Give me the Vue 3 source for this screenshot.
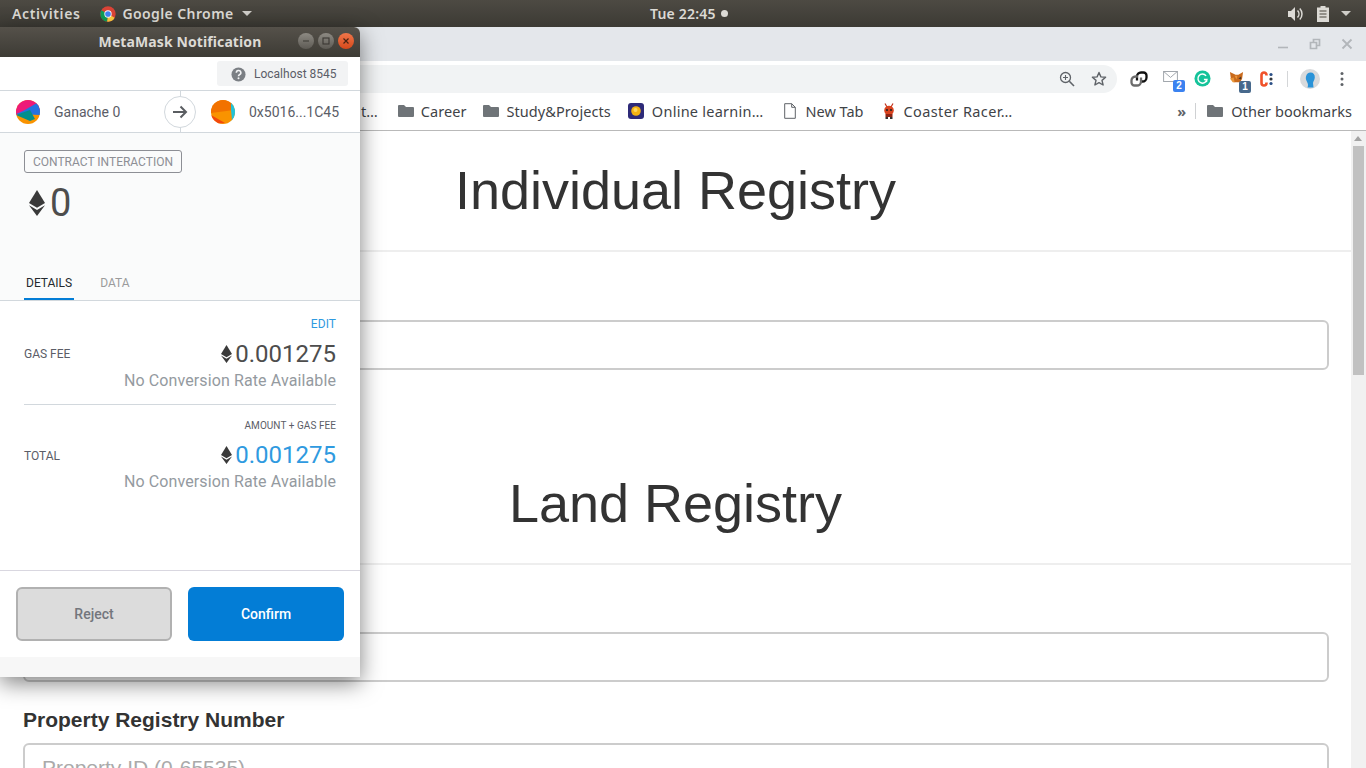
<script setup>
const leftItems = [
  { name: 'Career', icon: 'folder' },
  { name: 'Study&Projects', icon: 'folder' },
  { name: 'Online learnin…', icon: 'coin' },
  { name: 'New Tab', icon: 'page' },
  { name: 'Coaster Racer…', icon: 'bug' },
]

const feeRows = [
  { label: 'GAS FEE', head: 'EDIT', headClass: 'fee__head--edit', amount: '0.001275', amountClass: '' },
  { label: 'TOTAL', head: 'AMOUNT + GAS FEE', headClass: '', amountClass: 'fee__amount--blue', amount: '0.001275' },
]
</script>

<template>
  <div class="desktop">
    <!-- Ubuntu top bar -->
    <header class="topbar">
      <div class="topbar__left">
        <span class="topbar__item topbar__item--wide">Activities</span>
        <span class="topbar__app">
          <svg class="chrome-logo" viewBox="0 0 48 48">
            <circle cx="24" cy="24" r="23" fill="#db4437" />
            <path d="M24 24 44 35.5A23 23 0 0 1 21 46.8z" fill="#ffcd40" />
            <path d="M24 24 21 46.8A23 23 0 0 1 4 12.5z" fill="#0f9d58" />
            <circle cx="24" cy="24" r="11" fill="#fff" />
            <circle cx="24" cy="24" r="8.5" fill="#4285f4" />
          </svg>
          <span class="topbar__item">Google Chrome</span>
          <span class="caret"></span>
        </span>
      </div>
      <div class="topbar__clock">Tue 22:45<i class="dot"></i></div>
      <div class="topbar__right">
        <svg class="tray-icon tray-icon--sound" viewBox="0 0 18 16" width="18" height="16">
          <path d="M1 5h3l4-4v14l-4-4H1z" fill="#dcdad5" />
          <path d="M10.5 4.500a5 5 0 0 1 0 7M12.800 2.500a8 8 0 0 1 0 11" fill="none" stroke="#dcdad5" stroke-width="1.500" />
        </svg>
        <svg class="tray-icon" viewBox="0 0 12 16" width="12" height="16">
          <path d="M3.500 0h5v1.500H12V16H0V1.500h3.500z" fill="#dcdad5" />
          <path d="M2.500 5h7M2.500 8h7M2.500 11h7" stroke="#4a463f" stroke-width="1.200" />
        </svg>
        <span class="caret"></span>
      </div>
    </header>

    <!-- Chrome window -->
    <section class="browser">
      <div class="tabstrip">
        <div class="winctl">
          <svg viewBox="0 0 12 12" width="12" height="12"><path d="M1 9.500h10" stroke="#b2b6ba" stroke-width="1.600" /></svg>
          <svg viewBox="0 0 12 12" width="12" height="12">
            <path d="M1.500 4.500h6v6h-6zM4.500 4V1.500h6v6H8" fill="none" stroke="#b2b6ba" stroke-width="1.700" />
          </svg>
          <svg viewBox="0 0 12 12" width="12" height="12"><path d="M1.500 1.500l9 9M10.500 1.500l-9 9" stroke="#b2b6ba" stroke-width="1.800" /></svg>
        </div>
      </div>

      <div class="toolbar">
        <div class="omnibox">
          <svg viewBox="0 0 16 16" width="16" height="16">
            <circle cx="6.500" cy="6.500" r="5" fill="none" stroke="#5f6368" stroke-width="1.300" />
            <path d="M10.300 10.300 15 15" stroke="#5f6368" stroke-width="1.600" />
            <path d="M4 6.500h5M6.500 4v5" stroke="#5f6368" stroke-width="1.100" />
          </svg>
          <svg viewBox="0 0 16 16" width="16" height="16">
            <path d="M8 1.500l1.900 4.400 4.700.4-3.600 3.100 1.100 4.600L8 11.600 3.900 14l1.100-4.600-3.600-3.100 4.700-.4z" fill="none" stroke="#5f6368" stroke-width="1.400" stroke-linejoin="round" />
          </svg>
        </div>
        <div class="exts">
          <svg class="ext" viewBox="0 0 18 18" width="18" height="18">
            <path d="M7 10.500V6.500a4 4 0 0 1 4-4h2.500a3 3 0 0 1 3 3v2a4 4 0 0 1-4 4H10" fill="none" stroke="#111" stroke-width="2.300" />
            <path d="M11 7.500v4a4 4 0 0 1-4 4H4.500a3 3 0 0 1-3-3v-2a4 4 0 0 1 4-4H8" fill="none" stroke="#6b6b6b" stroke-width="2.300" />
          </svg>
          <span class="ext ext--mail">
            <svg viewBox="0 0 16 12" width="15" height="11">
              <rect x=".5" y=".5" width="15" height="11" fill="#fff" stroke="#9aa0a6" />
              <path d="M.5.500 8 7l7.500-6.500" fill="none" stroke="#9aa0a6" />
            </svg>
            <b class="badge badge--blue">2</b>
          </span>
          <svg class="ext ext--g" viewBox="0 0 18 18" width="17" height="17">
            <circle cx="9" cy="9" r="8.500" fill="#15c39a" />
            <path d="M12.800 6.200A4.800 4.800 0 1 0 13.700 10H10.500" fill="none" stroke="#fff" stroke-width="1.500" />
            <path d="M13.300 10v2.800" stroke="#fff" stroke-width="1.500" />
          </svg>
          <span class="ext ext--fox">
            <svg viewBox="0 0 16 16" width="15" height="15">
              <path d="M1 2l6 3h3l5-3-1 7-2 4H5L2 9z" fill="#c96a1c" />
              <path d="M1 9l4-1 1 5H4zM6 6 9 6l-1 4z" fill="#e9963a" />
              <path d="M10 9l3-2 0 3z" fill="#4a3524" />
            </svg>
            <b class="badge badge--slate">1</b>
          </span>
          <svg class="ext ext--c" viewBox="0 0 14 16" width="14" height="16">
            <path d="M7.500 4.500V4a2.500 2.500 0 0 0-5 0v8a2.500 2.500 0 0 0 5 0v-.5" fill="none" stroke="#f0522a" stroke-width="2.600" />
            <circle cx="12" cy="3.500" r="1.600" fill="#2b4f86" />
            <circle cx="12" cy="8" r="1.600" fill="#33373b" />
            <circle cx="12" cy="12.500" r="1.600" fill="#2b4f86" />
          </svg>
          <span class="toolbar__sep"></span>
          <svg class="ext" viewBox="0 0 20 20" width="20" height="20">
            <circle cx="10" cy="10" r="10" fill="#d8dadc" />
            <path d="M10.500 3.500c3 0 4.500 2 4.300 5-.2 2.500-1.500 3.500-1.800 5.500l.5 4.500H7.500c.8-2 .7-3.500-.4-5.500C6 11 5.500 9.500 6 7.500c.5-2.500 2.300-4 4.500-4z" fill="#2a93d8" />
          </svg>
          <svg class="ext ext--menu" viewBox="0 0 4 16" width="4" height="16">
            <circle cx="2" cy="2.500" r="1.500" fill="#5f6368" />
            <circle cx="2" cy="8" r="1.500" fill="#5f6368" />
            <circle cx="2" cy="13.500" r="1.500" fill="#5f6368" />
          </svg>
        </div>
      </div>

      <nav class="bookmarks">
        <span class="bookmarks__cut">t…</span>
        <span v-for="item in leftItems" :key="item.name" class="bookmark" :class="'bookmark--' + item.icon">
          <svg v-if="item.icon === 'folder'" class="bookmark__icon" viewBox="0 0 16 14" width="16" height="14">
            <path d="M0 2a1 1 0 0 1 1-1h5l2 2h7a1 1 0 0 1 1 1v8a1 1 0 0 1-1 1H1a1 1 0 0 1-1-1z" fill="#6f7478" />
          </svg>
          <svg v-else-if="item.icon === 'coin'" class="bookmark__icon" viewBox="0 0 16 16" width="16" height="16">
            <rect width="16" height="16" rx="3" fill="#2e2a78" />
            <circle cx="8" cy="8" r="4.800" fill="#f5b312" />
            <circle cx="7.500" cy="7" r="2" fill="#ffd75e" />
          </svg>
          <svg v-else-if="item.icon === 'page'" class="bookmark__icon" viewBox="0 0 12 16" width="12" height="16">
            <path d="M.7.700h7l3.600 3.600v11H.7zM7.700.700v3.600h3.600" fill="#fff" stroke="#5f6368" stroke-width="1" />
          </svg>
          <svg v-else class="bookmark__icon" viewBox="0 0 14 16" width="14" height="16">
            <path d="M3 .500 5 4M11 .500 9 4" stroke="#c0341d" stroke-width="1.200" />
            <circle cx="7" cy="7.500" r="4.800" fill="#d9431f" />
            <rect x="3.500" y="11" width="7" height="3" fill="#8f2413" />
            <rect x="3.500" y="14" width="2.500" height="2" fill="#333" />
            <rect x="8" y="14" width="2.500" height="2" fill="#333" />
            <circle cx="5" cy="7" r="1.100" fill="#222" />
            <circle cx="9" cy="7" r="1.100" fill="#222" />
          </svg>
          <span>{{ item.name }}</span>
        </span>
        <span class="bookmarks__more">»</span>
        <span class="bookmarks__sep"></span>
        <span class="bookmark bookmark--other">
          <svg class="bookmark__icon" viewBox="0 0 16 14" width="16" height="14">
            <path d="M0 2a1 1 0 0 1 1-1h5l2 2h7a1 1 0 0 1 1 1v8a1 1 0 0 1-1 1H1a1 1 0 0 1-1-1z" fill="#6f7478" />
          </svg>
          <span>Other bookmarks</span>
        </span>
      </nav>

      <div class="viewport">
        <main class="page">
          <h1 class="page__title">Individual Registry</h1>
          <hr class="page__rule" />
          <input class="page__input page__input--first" type="text" />

          <h1 class="page__title page__title--second">Land Registry</h1>
          <hr class="page__rule" />
          <input class="page__input page__input--second" type="text" />

          <label class="page__label">Property Registry Number</label>
          <input class="page__input" type="text" placeholder="Property ID (0-65535)" />
        </main>
        <aside class="scrollbar">
          <span class="scrollbar__arrow"></span>
          <span class="scrollbar__thumb"></span>
        </aside>
      </div>
    </section>

    <!-- MetaMask popup window, floats over the browser -->
    <section class="mm">
      <div class="mm__titlebar">
        <span class="mm__title">MetaMask Notification</span>
        <div class="mm__btns">
          <span class="wbtn"><svg viewBox="0 0 10 10" width="10" height="10"><path d="M2 5h6" stroke="#3b3833" stroke-width="1.200" /></svg></span>
          <span class="wbtn"><svg viewBox="0 0 10 10" width="10" height="10"><rect x="2" y="2" width="6" height="6" fill="none" stroke="#3b3833" stroke-width="1.100" /></svg></span>
          <span class="wbtn wbtn--close"><svg viewBox="0 0 10 10" width="10" height="10"><path d="M2.500 2.500l5 5M7.500 2.500l-5 5" stroke="#4a2312" stroke-width="1.200" /></svg></span>
        </div>
      </div>

      <div class="mm__network">
        <span class="net-pill">
          <svg viewBox="0 0 16 16" width="15" height="15">
            <circle cx="8" cy="8" r="7.500" fill="#7b7f84" />
            <path d="M5.700 6.200A2.400 2.400 0 1 1 9 8.300c-.7.400-1 .8-1 1.500" fill="none" stroke="#f2f3f4" stroke-width="1.700" />
            <circle cx="8" cy="12" r="1.100" fill="#f2f3f4" />
          </svg>
          <span>Localhost 8545</span>
        </span>
      </div>

      <div class="mm__parties">
        <div class="party party--from">
          <svg class="blockie" viewBox="0 0 24 24">
            <defs><clipPath id="c1"><circle cx="12" cy="12" r="12" /></clipPath></defs>
            <g clip-path="url(#c1)">
              <rect width="24" height="24" fill="#f99300" />
              <path d="M0 0h24v10L0 15z" fill="#ee1a78" />
              <path d="M7 11 21 3l3 4v8L0 14z" fill="#2472e0" />
              <path d="M0 15l14-5 5 9-5 2z" fill="#028f8b" />
            </g>
          </svg>
          <span>Ganache 0</span>
        </div>
        <div class="party-arrow">
          <svg viewBox="0 0 16 14" width="16" height="14">
            <path d="M1 7h13M8.500 1.500 14 7l-5.500 5.500" fill="none" stroke="#5a5d61" stroke-width="2" />
          </svg>
        </div>
        <div class="party party--to">
          <svg class="blockie" viewBox="0 0 24 24">
            <defs><clipPath id="c2"><circle cx="12" cy="12" r="12" /></clipPath></defs>
            <g clip-path="url(#c2)">
              <rect width="24" height="24" fill="#f99300" />
              <path d="M0 0h20l3 10L0 13z" fill="#f27200" />
              <path d="M20 0h4v24h-6l3-4-1-10z" fill="#21c3d9" />
              <path d="M0 15l14 8-10 1-4-3z" fill="#f2480c" />
            </g>
          </svg>
          <span>0x5016...1C45</span>
        </div>
      </div>

      <div class="mm__summary">
        <span class="mm__action">CONTRACT INTERACTION</span>
        <div class="mm__value">
          <svg class="eth eth--big" viewBox="0 0 16 26" width="16" height="26">
            <path d="M8 0 16 13 8 17.800 0 13z" fill="#3a3a3a" />
            <path d="M0 15.200 8 20 16 15.200 8 26z" fill="#3a3a3a" />
          </svg>
          <span>0</span>
        </div>
        <div class="mm__tabs">
          <span class="mm__tab mm__tab--active">DETAILS</span>
          <span class="mm__tab">DATA</span>
        </div>
      </div>

      <div class="mm__details">
        <div v-for="row in feeRows" :key="row.label" class="fee">
          <div class="fee__head" :class="row.headClass">{{ row.head }}</div>
          <div class="fee__main">
            <span class="fee__label">{{ row.label }}</span>
            <span class="fee__amount" :class="row.amountClass">
              <svg class="eth" viewBox="0 0 16 26" width="11" height="18">
                <path d="M8 0 16 13 8 17.800 0 13z" fill="#3a3a3a" />
                <path d="M0 15.200 8 20 16 15.200 8 26z" fill="#3a3a3a" />
              </svg>
              {{ row.amount }}
            </span>
          </div>
          <div class="fee__note">No Conversion Rate Available</div>
        </div>
      </div>

      <div class="mm__footer">
        <button class="mm__btn mm__btn--reject">Reject</button>
        <button class="mm__btn mm__btn--confirm">Confirm</button>
      </div>
      <div class="mm__strip"></div>
    </section>
  </div>
</template>

<style scoped>
.desktop {
  position: relative;
  display: flex;
  flex-direction: column;
  width: 1366px;
  height: 768px;
  overflow: hidden;
  background: #fff;
}

/* ── Top bar ─────────────────────────────────────────── */
.topbar {
  display: flex;
  align-items: center;
  justify-content: space-between;
  position: relative;
  height: 27px;
  padding: 0 12px;
  box-sizing: border-box;
  flex-shrink: 0;
  background: linear-gradient(#4d4a43, #3c3a34);
  color: #dcdad5;
  font: 600 14px "Noto Sans", sans-serif;
}
.topbar__left { display: flex; align-items: center; gap: 20px; }
.topbar__app { display: flex; align-items: center; gap: 6px; }
.topbar__item { letter-spacing: .4px; }
.topbar__item--wide { letter-spacing: .6px; }
.chrome-logo { width: 16px; height: 16px; }
.caret {
  display: inline-block;
  margin-left: 2px;
  border: 5px solid transparent;
  border-top: 5px solid #cfcdc8;
  border-bottom: 0;
  width: 0;
  height: 0;
}
.topbar__clock {
  position: absolute;
  left: 650px;
  display: flex;
  align-items: center;
  gap: 5px;
  letter-spacing: .2px;
}
.dot { width: 7px; height: 7px; border-radius: 50%; background: #dcdad5; }
.topbar__right { display: flex; align-items: center; gap: 10px; padding-right: 3px; }
.tray-icon--sound { margin-right: 2px; }

/* ── Chrome ──────────────────────────────────────────── */
.browser { display: flex; flex-direction: column; flex: 1; min-height: 0; }
.tabstrip {
  display: flex;
  justify-content: flex-end;
  align-items: center;
  height: 34px;
  flex-shrink: 0;
  background: #e4e7eb;
}
.winctl { display: flex; gap: 20px; padding-right: 13px; align-items: center; }
.toolbar {
  display: flex;
  align-items: center;
  height: 33px;
  flex-shrink: 0;
  background: #fff;
}
.omnibox {
  display: flex;
  align-items: center;
  justify-content: flex-end;
  gap: 16px;
  width: 1117px;
  height: 28px;
  padding-right: 10px;
  margin-top: 3px;
  box-sizing: border-box;
  border-radius: 0 14px 14px 0;
  background: #f1f3f4;
}
.exts { display: flex; align-items: center; margin-top: 3px; padding-left: 13px; }
.ext { flex-shrink: 0; margin-right: 15px; }
.ext--mail { position: relative; display: flex; width: 16px; height: 18px; margin-right: 15px; margin-top: -6px; align-items: center; }
.ext--g { margin-top: -2px; }
.ext--fox { position: relative; display: flex; width: 16px; height: 18px; margin-left: 3px; margin-right: 14px; margin-top: -4px; align-items: center; }
.badge {
  position: absolute;
  right: -6px;
  bottom: -7px;
  width: 12px;
  height: 12px;
  border-radius: 2px;
  color: #fff;
  font: 700 10px/12px "Liberation Sans", sans-serif;
  text-align: center;
}
.badge--blue { background: #3b82f0; }
.badge--slate { background: #47698c; }
.ext--c { margin-right: 14px; margin-top: -1px; }
.toolbar__sep { width: 1px; height: 16px; background: #d4d6d8; margin-right: 12px; }
.ext--menu { margin-left: 5px; margin-right: 0; }

.bookmarks {
  position: relative;
  display: flex;
  align-items: center;
  height: 37px;
  padding: 0 14px 3px 361px;
  box-sizing: border-box;
  flex-shrink: 0;
  background: #fff;
  border-bottom: 1px solid #b9b9b9;
  color: #3f4347;
  font: 14.500px "Noto Sans", sans-serif;
}
.bookmarks__cut { margin-right: 20px; }
.bookmark { display: flex; align-items: center; white-space: nowrap; }
.bookmark--folder { gap: 7px; margin-right: 17px; letter-spacing: .07px; }
.bookmark--coin { gap: 8px; margin-right: 21px; letter-spacing: .25px; }
.bookmark--page { gap: 9px; margin-right: 18px; }
.bookmark--bug { gap: 8px; letter-spacing: .4px; }
.bookmark--other { gap: 8px; letter-spacing: .05px; }
.bookmark__icon { flex-shrink: 0; }
.bookmarks__more { margin-left: auto; margin-right: 9px; color: #5f6368; font-weight: 700; }
.bookmarks__sep { width: 1px; height: 16px; background: #cfd1d3; margin-right: 11px; }

.viewport { display: flex; flex: 1; min-height: 0; overflow: hidden; }
.page {
  flex: 1;
  min-width: 0;
  font-family: "Liberation Sans", sans-serif;
  color: #333;
}
.page__title {
  margin: 0;
  padding-top: 28px;
  height: 91px;
  box-sizing: content-box;
  text-align: center;
  font-size: 54px;
  line-height: 62px;
  font-weight: 400;
}
.page__title--second { padding-top: 102px; }
.page__rule { margin: 0; border: 0; border-top: 2px solid #eee; }
.page__input {
  display: block;
  width: 1306px;
  height: 50px;
  margin-left: 23px;
  padding: 0 17px;
  box-sizing: border-box;
  border: 2px solid #ccc;
  border-radius: 6px;
  background: #fff;
  font: 21px "Liberation Sans", sans-serif;
}
.page__input::placeholder { color: #aaa; opacity: 1; }
.page__input--first { margin-top: 68px; }
.page__input--second { margin-top: 67px; }
.page__label {
  display: block;
  margin: 26px 0 11px 23px;
  font-size: 21px;
  line-height: 24px;
  font-weight: 700;
}
.scrollbar {
  position: relative;
  width: 15px;
  flex-shrink: 0;
  background: #f1f1f1;
}
.scrollbar__arrow {
  display: block;
  width: 0;
  margin: 5px 0 0 3px;
  border: 4.500px solid transparent;
  border-bottom: 5px solid #a3a3a3;
  border-top: 0;
}
.scrollbar__thumb {
  display: block;
  width: 11px;
  height: 229px;
  margin: 5px 0 0 2px;
  background: #c1c1c1;
}

/* ── MetaMask window ─────────────────────────────────── */
.mm {
  position: absolute;
  left: 0;
  top: 27px;
  display: flex;
  flex-direction: column;
  width: 360px;
  height: 650px;
  overflow: hidden;
  border-radius: 0 6px 0 0;
  background: #fff;
  font-family: Roboto, sans-serif;
  box-shadow: 0 6px 22px rgba(0, 0, 0, .5);
}
.mm__titlebar {
  position: relative;
  display: flex;
  align-items: center;
  justify-content: center;
  height: 30px;
  padding-bottom: 2px;
  box-sizing: border-box;
  flex-shrink: 0;
  background: linear-gradient(#55514a, #3d3b35);
  color: #dcdad5;
  font: 700 14px "Noto Sans", sans-serif;
}
.mm__title { letter-spacing: .1px; }
.mm__btns { position: absolute; right: 6px; top: 6px; display: flex; gap: 4px; }
.wbtn {
  display: flex;
  align-items: center;
  justify-content: center;
  width: 16px;
  height: 16px;
  border-radius: 50%;
  background: linear-gradient(#8d8a83, #5d5a54);
}
.wbtn--close { background: linear-gradient(#f0764a, #d5491b); }
.mm__network {
  display: flex;
  justify-content: flex-end;
  align-items: flex-start;
  height: 34px;
  padding: 4px 12px 0 0;
  box-sizing: border-box;
  flex-shrink: 0;
  border-bottom: 1px solid #d2d8dd;
}
.net-pill {
  display: flex;
  align-items: center;
  gap: 8px;
  width: 131px;
  height: 25px;
  padding: 1px 0 0 14px;
  box-sizing: border-box;
  border-radius: 3px;
  background: #f2f3f4;
  color: #5b5d67;
  font-size: 12px;
}
.mm__parties {
  position: relative;
  display: flex;
  align-items: center;
  height: 42px;
  flex-shrink: 0;
  box-sizing: border-box;
  border-bottom: 1px solid #d2d8dd;
  color: #5b5d67;
  font-size: 14px;
}
.mm__parties::before {
  content: '';
  position: absolute;
  left: 180px;
  top: 0;
  bottom: 0;
  width: 1px;
  background: #d2d8dd;
}
.party { display: flex; align-items: center; gap: 14px; }
.party--from { width: 164px; padding-left: 16px; box-sizing: border-box; }
.party--to { margin-left: 15px; gap: 14px; }
.blockie { width: 24px; height: 24px; flex-shrink: 0; }
.party-arrow {
  position: relative;
  display: flex;
  align-items: center;
  justify-content: center;
  width: 32px;
  height: 32px;
  flex-shrink: 0;
  border-radius: 50%;
  background: #fff;
  border: 1px solid #d2d8dd;
  box-sizing: border-box;
}
.mm__summary {
  position: relative;
  height: 168px;
  padding: 17px 24px 0;
  box-sizing: border-box;
  flex-shrink: 0;
  background: #fafbfb;
  border-bottom: 1px solid #d2d8dd;
}
.mm__action {
  display: inline-block;
  padding: 0 8px;
  height: 23px;
  line-height: 22px;
  box-sizing: border-box;
  border: 1px solid #8d8f95;
  border-radius: 3px;
  color: #8d8f95;
  font-size: 12px;
}
.mm__value {
  display: flex;
  align-items: center;
  gap: 5px;
  margin: 8px 0 0 5px;
  color: #4d4d4d;
  font-size: 38px;
  line-height: 44px;
}
.mm__tabs { position: absolute; left: 24px; bottom: 0; display: flex; gap: 24px; font-size: 12px; color: #9b9b9b; }
.mm__tab { padding: 0 2px; height: 36px; line-height: 38px; box-sizing: border-box; }
.mm__tab--active { color: #24292e; border-bottom: 2px solid #037dd6; }
.mm__details { flex: 1; padding: 0 24px; }
.fee { padding: 17px 0 0; border-bottom: 1px solid #d2d8dd; height: 104px; box-sizing: border-box; }
.fee__main { display: flex; justify-content: space-between; align-items: center; margin-top: 10px; color: #4d4d4d; }
.fee:last-child { border-bottom: 0; padding-top: 15px; }
.fee:last-child .fee__main { margin-top: 9px; }
.fee:last-child .fee__label { margin-top: 2px; }
.fee__head { text-align: right; font-size: 10px; line-height: 12px; color: #5b5d67; letter-spacing: .05px; }
.fee__head--edit { color: #2f9ae0; font-size: 12px; }
.fee__label { font-size: 12px; color: #5b5d67; }
.fee__amount { display: flex; align-items: center; gap: 3px; font-size: 24px; line-height: 28px; }
.fee__amount--blue { color: #2f9ae0; }
.fee__note { text-align: right; color: #949aa0; font-size: 16px; letter-spacing: .11px; line-height: 20px; margin-top: 3px; }
.mm__footer {
  display: flex;
  gap: 16px;
  height: 87px;
  padding: 16px 16px 0;
  box-sizing: border-box;
  flex-shrink: 0;
  border-top: 1px solid #d9d7e0;
}
.mm__btn {
  flex: 0 0 156px;
  height: 54px;
  border-radius: 6px;
  font: 500 14px Roboto, sans-serif;
}
.mm__btn--reject { background: #dcdcdc; border: 2px solid #b1b1b1; color: #73767c; }
.mm__btn--confirm { background: #037dd6; border: 0; color: #fff; }
.mm__strip { height: 20px; background: #f7f7f7; flex-shrink: 0; }
</style>
